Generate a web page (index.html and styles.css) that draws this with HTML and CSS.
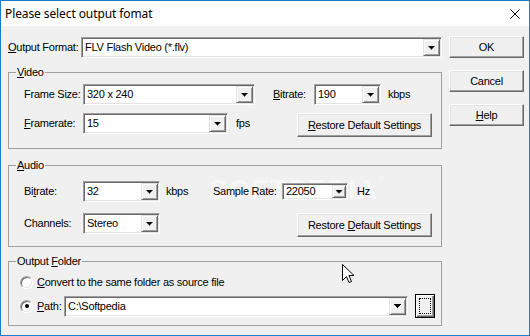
FILE: index.html
```html
<!DOCTYPE html>
<html>
<head>
<meta charset="utf-8">
<title>Please select output fomat</title>
<link rel="stylesheet" href="styles.css">
</head>
<body>
<div class="window">
  <div class="titlebar">
    <span class="title">Please select output fomat</span>
    <svg class="close" width="10" height="10" viewBox="0 0 10 10"><path d="M0.5 0.5L9.5 9.5M9.5 0.5L0.5 9.5" stroke="#000" stroke-width="1" fill="none"/></svg>
  </div>
  <div class="body">
    <div class="main">
      <div class="row format-row">
        <span class="lbl w-format"><u>O</u>utput Format:</span>
        <div class="combo grow"><span class="val">FLV Flash Video (*.flv)</span><span class="arrow"></span></div>
      </div>

      <fieldset class="group video">
        <legend><u>V</u>ideo</legend>
        <div class="gb">
          <div class="row">
            <span class="lbl w-lbl">Frame Size:</span>
            <div class="combo w-frame"><span class="val">320 x 240</span><span class="arrow"></span></div>
            <span class="lbl w-vbit"><u>B</u>itrate:</span>
            <div class="combo w-vbitc"><span class="val">190</span><span class="arrow"></span></div>
            <span class="lbl unit-kbps">kbps</span>
          </div>
          <div class="row row2">
            <span class="lbl w-lbl"><u>F</u>ramerate:</span>
            <div class="combo w-rate"><span class="val">15</span><span class="arrow"></span></div>
            <span class="lbl unit-fps">fps</span>
            <button class="btn restore"><u>R</u>estore Default Settings</button>
          </div>
        </div>
      </fieldset>

      <fieldset class="group audio">
        <legend><u>A</u>udio</legend>
        <div class="gb">
          <div class="row">
            <span class="lbl w-lbl">Bi<u>t</u>rate:</span>
            <div class="combo w-abit"><span class="val">32</span><span class="arrow"></span></div>
            <span class="lbl unit-akbps">kbps</span>
            <span class="lbl w-srate">Sample Rate:</span>
            <div class="combo small w-sratec"><span class="val">22050</span><span class="arrow"></span></div>
            <span class="lbl unit-hz">Hz</span>
          </div>
          <div class="row row2 arow2">
            <span class="lbl w-lbl">Channels:</span>
            <div class="combo w-abit"><span class="val">Stereo</span><span class="arrow"></span></div>
            <button class="btn restore">Restore <u>D</u>efault Settings</button>
          </div>
        </div>
      </fieldset>

      <fieldset class="group folder">
        <legend>Output <u>F</u>older</legend>
        <div class="gb">
          <div class="row radio-row">
            <span class="radio"></span>
            <span class="lbl rlbl"><u>C</u>onvert to the same folder as source file</span>
          </div>
          <div class="row path-row">
            <span class="radio checked"></span>
            <span class="lbl rlbl w-path"><u>P</u>ath:</span>
            <div class="combo grow"><span class="val">C:\Softpedia</span><span class="arrow"></span></div>
            <button class="btn browse"><span class="focus"></span></button>
          </div>
        </div>
      </fieldset>
    </div>

    <div class="side">
      <button class="btn side-btn">OK</button>
      <button class="btn side-btn">Cancel</button>
      <button class="btn side-btn"><u>H</u>elp</button>
    </div>
  </div>

  <div class="watermark">SOFTPEDIA<sup>®</sup></div>
  <svg class="cursor" width="13" height="20" viewBox="0 0 13 20"><path d="M0.5 0.5V16.5L4.5 12.5L7 18.5L9.5 17.5L7 11.5H12Z" fill="#fff" stroke="#000" stroke-width="1" stroke-linejoin="miter"/></svg>
</div>
</body>
</html>
```

FILE: styles.css
```css
html, body {
  margin: 0;
  padding: 0;
  background: #f0f0f0;
}

.window {
  position: relative;
  width: 530px;
  height: 336px;
  box-sizing: border-box;
  border: 1px solid #1c7bcf;
  background: #f0f0f0;
  font-family: "Liberation Sans", Arial, sans-serif;
  font-size: 11px;
  letter-spacing: -0.25px;
  color: #000;
  overflow: hidden;
}

.titlebar {
  height: 25px;
  background: #fff;
  display: flex;
  align-items: center;
  justify-content: space-between;
  padding: 0 9px 0 4px;
}

.title {
  font-family: "Noto Sans", "Open Sans", sans-serif;
  font-size: 12px;
  letter-spacing: -0.1px;
}

.close {
  display: block;
}

.body {
  position: relative;
  z-index: 1;
  display: flex;
  gap: 7px;
  padding: 10px 5px 0 7px;
}

.main {
  width: 434px;
  display: flex;
  flex-direction: column;
}

.side {
  width: 75px;
  display: flex;
  flex-direction: column;
  gap: 12px;
}

.row {
  display: flex;
  align-items: flex-start;
}

.lbl {
  line-height: 21px;
  white-space: nowrap;
}

u {
  text-decoration: underline;
  text-underline-offset: 1px;
}

.format-row {
  margin-top: 1px;
}

.w-format { width: 73px; }
.grow { flex: 1; }

/* combo box: classic sunken */
.combo {
  height: 21px;
  box-sizing: border-box;
  display: flex;
  align-items: stretch;
  background: #fff;
  border: 1px solid;
  border-color: #a0a0a0 #fff #fff #a0a0a0;
  box-shadow: inset 1px 1px 0 #696969, inset -1px -1px 0 #e3e3e3;
  padding: 1px;
  flex-shrink: 0;
}

.combo .val {
  flex: 1;
  padding-left: 2px;
  line-height: 17px;
  white-space: nowrap;
  overflow: hidden;
}

.combo .arrow {
  width: 17px;
  box-sizing: border-box;
  background: #f0f0f0;
  border: 1px solid;
  border-color: #e3e3e3 #696969 #696969 #e3e3e3;
  box-shadow: inset 1px 1px 0 #fff, inset -1px -1px 0 #a0a0a0;
  display: flex;
  align-items: center;
  justify-content: center;
}

.combo .arrow::after {
  content: "";
  width: 7px;
  height: 4px;
  background: #000;
  clip-path: polygon(0 0, 7px 0, 7px 1px, 6px 1px, 6px 2px, 5px 2px, 5px 3px, 4px 3px, 4px 4px, 3px 4px, 3px 3px, 2px 3px, 2px 2px, 1px 2px, 1px 1px, 0 1px);
}

.combo.small {
  height: 17px;
  align-self: center;
}

.combo.small .val {
  line-height: 13px;
}

.combo.small .arrow {
  width: 14px;
}

/* group boxes */
.group {
  margin: 0;
  padding: 0;
  min-inline-size: 0;
  border: 1px solid #a0a0a0;
}

.group legend {
  margin-left: 7px;
  padding: 0 1px;
  line-height: 13px;
}

.video { margin-top: 8px; }
.audio { margin-top: 10px; }
.folder { margin-top: 8px; }

.video .gb { padding: 5px 9px 11px 15px; }
.audio .gb { padding: 9px 9px 9px 15px; }
.folder .gb { padding: 7px 6px 7px 11px; }

.w-lbl { width: 59px; }
.w-frame { width: 172px; }
.w-vbit { width: 41px; margin-left: 18px; }
.w-vbitc { width: 67px; }
.unit-kbps { margin-left: 7px; }

.row2 { margin-top: 8px; }
.w-rate { width: 145px; }
.unit-fps { margin-left: 8px; }

.w-abit { width: 77px; }
.unit-akbps { width: 47px; margin-left: 6px; }
.w-srate { width: 69px; }
.w-sratec { width: 66px; }
.unit-hz { margin-left: 9px; }

.arow2 { margin-top: 11px; }

/* buttons: classic raised */
.btn {
  font: inherit;
  letter-spacing: inherit;
  color: #000;
  background: #f0f0f0;
  border: 1px solid;
  border-color: #fff #696969 #696969 #fff;
  box-shadow: inset -1px -1px 0 #a0a0a0, inset 1px 1px 0 #e3e3e3;
  padding: 0;
  margin: 0;
  box-sizing: border-box;
  cursor: default;
}

.restore {
  width: 135px;
  height: 24px;
  margin-left: auto;
}

.side-btn {
  width: 75px;
  height: 22px;
}

/* output folder */
.radio-row {
  align-items: center;
  height: 14px;
}

.path-row {
  align-items: center;
  margin-top: 5px;
}

.radio {
  width: 13px;
  height: 13px;
  box-sizing: border-box;
  border-radius: 50%;
  background: #fff;
  border: 1px solid;
  border-color: #a0a0a0 #fff #fff #a0a0a0;
  box-shadow: inset 1px 1px 0 #696969, inset -1px -1px 0 #e3e3e3;
  display: flex;
  align-items: center;
  justify-content: center;
  flex-shrink: 0;
}

.radio.checked::after {
  content: "";
  width: 4px;
  height: 4px;
  border-radius: 50%;
  background: #000;
}

.rlbl {
  margin-left: 4px;
  line-height: 14px;
}

.path-row .rlbl {
  line-height: 21px;
}

.w-path { width: 27px; }

.browse {
  width: 20px;
  height: 24px;
  margin-left: 7px;
  border: 1px solid #000;
  box-shadow: inset 1px 1px 0 #fff, inset -1px -1px 0 #696969, inset -2px -2px 0 #a0a0a0;
  display: flex;
  padding: 3px;
}

.browse .focus {
  flex: 1;
  border: 1px dotted #000;
}

/* overlays */
.watermark {
  position: absolute;
  z-index: 0;
  left: 208px;
  top: 173px;
  font-family: "Liberation Sans", Arial, sans-serif;
  font-weight: bold;
  font-size: 28px;
  letter-spacing: 1px;
  color: rgba(255, 255, 255, 0.55);
  pointer-events: none;
}

.watermark sup {
  font-size: 9px;
  font-weight: normal;
  vertical-align: top;
}

.cursor {
  position: absolute;
  z-index: 2;
  left: 341px;
  top: 263px;
}
```
